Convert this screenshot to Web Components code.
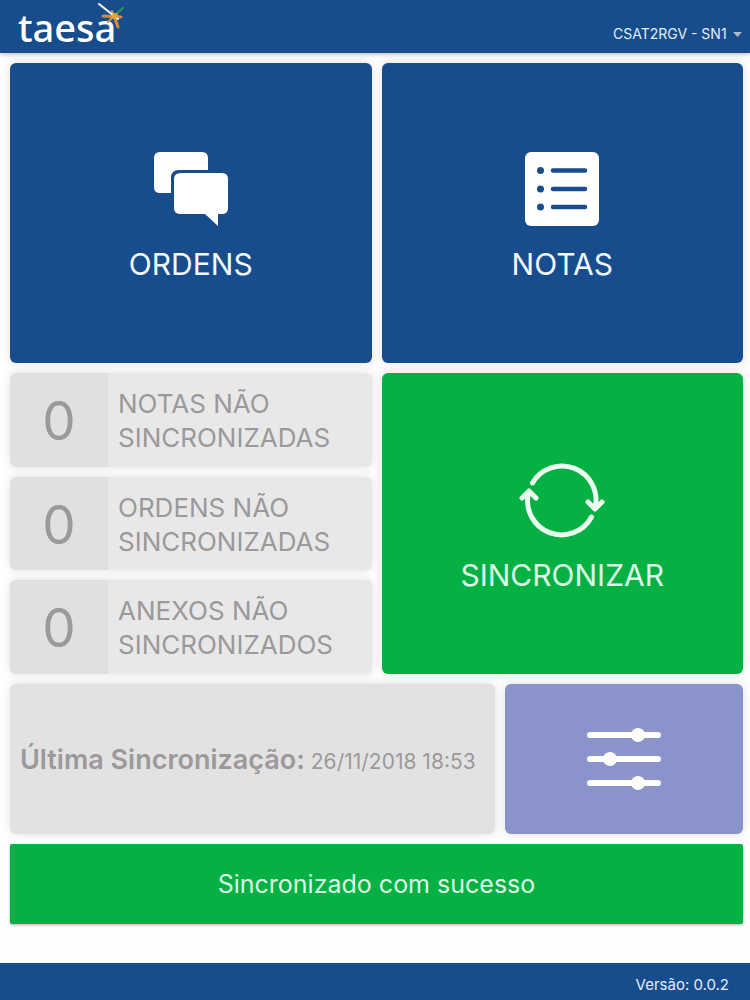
<!DOCTYPE html>
<html lang="pt-BR">
<head>
<meta charset="utf-8">
<meta name="viewport" content="width=device-width, initial-scale=1">
<title>taesa</title>
<style>
  html {
    --blue: #174c8d;
    --green: #05b143;
    --violet: #8b94ca;
    --muted: #9b999a;
    --shadow: 0 0 10px rgba(0,0,0,.12);
  }

  body {
    margin: 0;
    min-height: 100vh;
    display: flex;
    flex-direction: column;
    background: #fefefe;
    color: #fff;
    font-family: Inter, Roboto, "Liberation Sans", sans-serif;
  }
</style>
</head>
<body>
<app-header></app-header>
<home-panel>
  <menu-tile label="ORDENS">
    <svg width="76" height="76" viewBox="0 0 76 76" fill="#fff" aria-hidden="true">
      <path d="M7 1H49Q55 1 55 7V19H26Q18 19 18 27V42H7Q1 42 1 36V7Q1 1 7 1Z"/>
      <path d="M28 22H69Q75 22 75 28V57Q75 63 69 63H65V75L52 63H28Q21 63 21 57V28Q21 22 28 22Z"/>
    </svg>
  </menu-tile>
  <menu-tile label="NOTAS">
    <svg width="76" height="76" viewBox="0 0 76 76" aria-hidden="true">
      <rect x="1" y="1" width="74" height="74" rx="6" fill="#fff"/>
      <g fill="#174c8d">
        <circle cx="16.500" cy="19.500" r="3.500"/>
        <circle cx="16.500" cy="38" r="3.500"/>
        <circle cx="16.500" cy="56" r="3.500"/>
      </g>
      <path d="M29 19.500H61M29 38H61M29 56H61" stroke="#174c8d" stroke-width="4.500" stroke-linecap="round"/>
    </svg>
  </menu-tile>
  <stat-list>
    <stat-card count="0">NOTAS NÃO SINCRONIZADAS</stat-card>
    <stat-card count="0">ORDENS NÃO SINCRONIZADAS</stat-card>
    <stat-card count="0">ANEXOS NÃO SINCRONIZADOS</stat-card>
  </stat-list>
  <menu-tile class="green" label="SINCRONIZAR">
    <svg width="88" height="76" viewBox="0 0 88 76" fill="none" stroke="#eafff0" stroke-width="5" stroke-linecap="round" stroke-linejoin="round" aria-hidden="true">
      <path d="M14.500 21A34 34 0 0 1 77 46"/>
      <path d="M73.500 55A34 34 0 0 1 10.500 31"/>
      <path d="M4 36L11 29L18 36M70 40L77 47L84 40"/>
    </svg>
  </menu-tile>
  <last-sync date="26/11/2018 18:53"></last-sync>
  <menu-tile class="small" name="Configurações">
    <svg width="76" height="64" viewBox="0 0 76 64" aria-hidden="true">
      <path d="M4 8H72M4 32H72M4 56H72" stroke="#fff" stroke-width="6" stroke-linecap="round"/>
      <g fill="#fff">
        <circle cx="52" cy="8" r="7"/>
        <circle cx="24" cy="32" r="7"/>
        <circle cx="52" cy="56" r="7"/>
      </g>
    </svg>
  </menu-tile>
  <status-bar>Sincronizado com sucesso</status-bar>
</home-panel>
<app-footer>Versão: 0.0.2</app-footer>

<script>
/* Base: clones the template into an open shadow root */
class BaseElement extends HTMLElement {
  constructor () {
    super();
    const template = document.createElement('template');
    template.innerHTML = this.constructor.markup;
    this.attachShadow({mode: 'open'});
    this.shadowRoot.appendChild(template.content.cloneNode(true));
  }
}

/* Header */
class AppHeader extends BaseElement {
  static markup = `
    <style>
      :host {
        display: block;
        background: var(--blue);
        box-shadow: 0 1px 5px rgba(0,0,0,.3);
      }

      header {
        display: flex;
        align-items: flex-end;
        justify-content: space-between;
        height: 53px;
        padding: 0 8px 0 18px;
        box-sizing: border-box;
      }

      .logo {
        position: relative;
        font: 500 38px/48px "Noto Sans", sans-serif;
        height: 50px;
      }

      .logo svg {
        position: absolute;
        left: 76px;
        top: 0;
      }

      .user {
        display: flex;
        align-items: center;
        gap: 6px;
        height: 38px;
      }

      select {
        appearance: none;
        border: 0;
        padding: 0;
        background: none;
        color: #e3edfa;
        font: 14px/18px Inter, sans-serif;
      }
    </style>
    <header>
      <div class="logo">taesa
        <svg width="32" height="32" viewBox="0 0 32 32" stroke-linecap="round" aria-hidden="true">
          <path d="M21 12L29 5" stroke="#2e9a54" stroke-width="2"/>
          <path d="M9 13L27 14M20 13L24 24" stroke="#d98b3d" stroke-width="3"/>
          <path d="M20 13L14 19M18 8L20 13" stroke="#c9a13f" stroke-width="2"/>
          <path d="M5 1L24 16" stroke="#fff" stroke-width="2"/>
          <circle cx="21" cy="13" r="3" fill="#e0a83c"/>
        </svg>
      </div>
      <label class="user">
        <select aria-label="Centro de trabalho">
          <option>CSAT2RGV - SN1</option>
        </select>
        <svg width="9" height="5" viewBox="0 0 9 5" aria-hidden="true"><path d="M0 0H9L4.500 5Z" fill="#a9b9ce"/></svg>
      </label>
    </header>
  `;
}

/* Grid of six columns that holds the home tiles */
class HomePanel extends BaseElement {
  static markup = `
    <style>
      :host {
        display: block;
        flex: 1;
        padding: 10px 7px 10px 10px;
      }

      main {
        display: grid;
        grid-template-columns: repeat(6, 1fr);
        gap: 10px;
      }

      ::slotted(*) { grid-column: span 3; }
      ::slotted(last-sync) { grid-column: span 4; }
      ::slotted(.small) { grid-column: span 2; }
      ::slotted(status-bar) { grid-column: span 6; }
    </style>
    <main><slot></slot></main>
  `;
}

class MenuTile extends BaseElement {
  static markup = `
    <style>
      :host {
        display: flex;
        min-height: 300px;
        --tile: var(--blue);
      }

      :host(.green) {
        min-height: 301px;
        --tile: var(--green);
      }

      :host(.small) {
        min-height: 150px;
        --tile: var(--violet);
      }

      button {
        flex: 1;
        display: flex;
        flex-direction: column;
        align-items: center;
        justify-content: center;
        gap: 17px;
        border: 0;
        border-radius: 6px;
        padding: 9px 0 0;
        background: var(--tile);
        box-shadow: var(--shadow);
        color: #f3f9ff;
        font: 30px/40px Inter, sans-serif;
        cursor: pointer;
      }

      :host(.small) button { padding: 0; }
      :host(.green) button { color: #dcfbe6; }
      span:empty { display: none; }
      ::slotted(svg) { display: block; }
    </style>
    <button type="button"><slot></slot><span></span></button>
  `;

  connectedCallback() {
    this.shadowRoot.querySelector('span').textContent = this.getAttribute('label') || '';
    if (this.hasAttribute('name')) {
      this.shadowRoot.querySelector('button').setAttribute('aria-label', this.getAttribute('name'));
    }
  }
}

class StatList extends BaseElement {
  static markup = `
    <style>
      :host {
        display: flex;
        flex-direction: column;
        gap: 10px;
      }
    </style>
    <slot></slot>
  `;
}

class StatCard extends BaseElement {
  static markup = `
    <style>
      :host {
        flex: 1;
        display: flex;
        border-radius: 6px;
        overflow: hidden;
        background: #e9e8e9;
        box-shadow: var(--shadow);
        color: var(--muted);
      }

      .count {
        display: flex;
        align-items: center;
        justify-content: center;
        width: 98px;
        padding-top: 2px;
        background: #e1e0e1;
        font-size: 53px;
        line-height: 60px;
      }

      .text {
        flex: 1;
        align-self: center;
        padding: 2px 10px 0;
        font-size: 26px;
        line-height: 34px;
      }
    </style>
    <div class="count"></div>
    <div class="text"><slot></slot></div>
  `;

  connectedCallback() {
    this.shadowRoot.querySelector('.count').textContent = this.getAttribute('count');
  }
}

class LastSync extends BaseElement {
  static markup = `
    <style>
      :host {
        display: flex;
        align-items: center;
        padding: 4px 10px 0;
        border-radius: 6px;
        background: #e3e2e3;
        box-shadow: var(--shadow);
        color: var(--muted);
      }

      p {
        margin: 0;
        font-size: 21px;
        line-height: 34px;
      }

      b {
        font-size: 27px;
        font-weight: 600;
      }
    </style>
    <p><b>Última Sincronização:</b> <time></time></p>
  `;

  connectedCallback() {
    this.shadowRoot.querySelector('time').textContent = this.getAttribute('date');
  }
}

class StatusBar extends BaseElement {
  static markup = `
    <style>
      :host {
        display: flex;
        align-items: center;
        justify-content: center;
        min-height: 80px;
        border-radius: 2px;
        background: var(--green);
        box-shadow: 0 1px 3px rgba(0,0,0,.3);
        color: #dcfbe6;
        font-size: 25px;
        line-height: 34px;
      }
    </style>
    <slot></slot>
  `;
}

class AppFooter extends BaseElement {
  static markup = `
    <style>
      footer {
        padding: 10px 21px 3px;
        background: var(--blue);
        color: #e3edfa;
        font-size: 15px;
        line-height: 24px;
        text-align: right;
      }

      :host { display: block; }
    </style>
    <footer><slot></slot></footer>
  `;
}

window.customElements.define('app-header', AppHeader);
window.customElements.define('home-panel', HomePanel);
window.customElements.define('menu-tile', MenuTile);
window.customElements.define('stat-list', StatList);
window.customElements.define('stat-card', StatCard);
window.customElements.define('last-sync', LastSync);
window.customElements.define('status-bar', StatusBar);
window.customElements.define('app-footer', AppFooter);
</script>
</body>
</html>
